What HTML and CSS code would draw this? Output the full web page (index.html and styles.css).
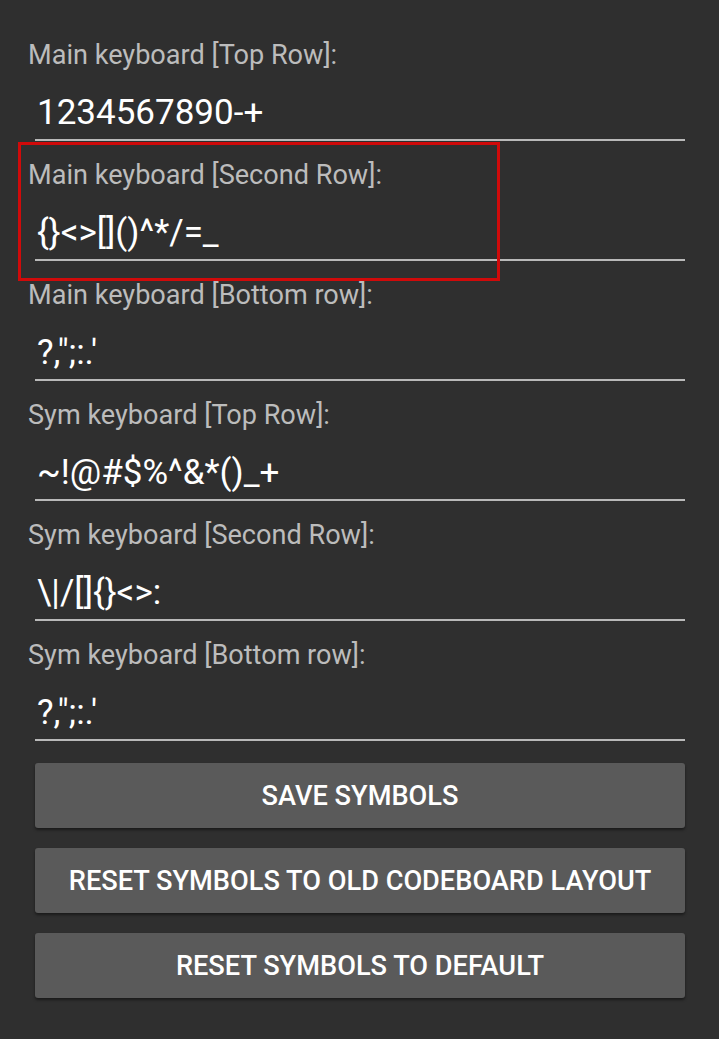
FILE: index.html
```html
<!DOCTYPE html>
<html>
<head>
<meta charset="utf-8">
<link rel="stylesheet" href="styles.css">
</head>
<body>
<div class="page">
  <div class="field">
    <div class="label">Main keyboard [Top Row]:</div>
    <div class="input">1234567890-+</div>
  </div>
  <div class="field highlighted">
    <div class="label">Main keyboard [Second Row]:</div>
    <div class="input">{}&lt;&gt;[]()^*/=_</div>
    <div class="mark"></div>
  </div>
  <div class="field">
    <div class="label">Main keyboard [Bottom row]:</div>
    <div class="input">?,";:.'</div>
  </div>
  <div class="field">
    <div class="label">Sym keyboard [Top Row]:</div>
    <div class="input">~!@#$%^&amp;*()_+</div>
  </div>
  <div class="field">
    <div class="label">Sym keyboard [Second Row]:</div>
    <div class="input">\|/[]{}&lt;&gt;:</div>
  </div>
  <div class="field">
    <div class="label">Sym keyboard [Bottom row]:</div>
    <div class="input">?,";:.'</div>
  </div>
  <div class="buttons">
    <button class="btn">SAVE SYMBOLS</button>
    <button class="btn">RESET SYMBOLS TO OLD CODEBOARD LAYOUT</button>
    <button class="btn">RESET SYMBOLS TO DEFAULT</button>
  </div>
</div>
</body>
</html>
```
FILE: styles.css
```css
html, body {
  margin: 0;
  padding: 0;
  background: #2f2f2f;
}
body {
  width: 719px;
  height: 1039px;
  overflow: hidden;
  font-family: Roboto, "Noto Sans", sans-serif;
}
.page {
  padding: 39px 34px 0 27px;
  display: flex;
  flex-direction: column;
}
.field {
  position: relative;
  display: flex;
  flex-direction: column;
  margin-bottom: 18px;
}
.label {
  font-size: 27.1px;
  line-height: 32px;
  color: #bcbcbc;
  padding-left: 1px;
}
.input {
  margin-top: 20px;
  margin-left: 8px;
  padding-left: 2px;
  font-size: 35px;
  line-height: 44px;
  color: #ffffff;
  padding-bottom: 4px;
  border-bottom: 2px solid #b9b9b9;
}
.mark {
  position: absolute;
  top: -17px;
  left: -9px;
  width: 476px;
  height: 133px;
  border: 3px solid #d00a0a;
}
.buttons {
  margin-top: 4px;
  margin-left: 8px;
  display: flex;
  flex-direction: column;
  gap: 20px;
}
.btn {
  height: 65px;
  border: none;
  border-radius: 3px;
  background: #5a5a5a;
  color: #ffffff;
  font-family: Roboto, "Noto Sans", sans-serif;
  font-weight: 500;
  font-size: 27.2px;
  box-shadow: 0 2px 3px rgba(0, 0, 0, 0.45);
  padding: 0;
}
```
